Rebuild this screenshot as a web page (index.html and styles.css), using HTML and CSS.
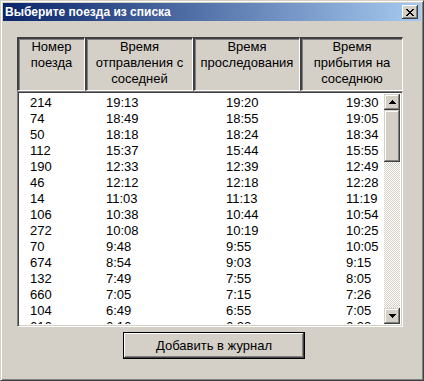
FILE: index.html
```html
<!DOCTYPE html>
<html lang="ru">
<head>
  <meta charset="UTF-8">
  <title>Выберите поезда из списка</title>
  <link rel="stylesheet" href="styles.css">
</head>
<body>
  <div class="window">
    <div class="titlebar">
      <span class="title">Выберите поезда из списка</span>
      <div class="close">
        <svg width="8" height="7" viewBox="0 0 8 7"><path d="M0 0h2v1H0zM6 0h2v1H6zM1 1h2v1H1zM5 1h2v1H5zM2 2h4v1H2zM3 3h2v1H3zM2 4h4v1H2zM1 5h2v1H1zM5 5h2v1H5zM0 6h2v1H0zM6 6h2v1H6z" fill="#000"/></svg>
      </div>
    </div>

    <div class="content">
      <div class="header">
        <div class="hcell c1">Номер<br>поезда</div>
        <div class="hcell c2">Время<br>отправления с<br>соседней</div>
        <div class="hcell c3">Время<br>проследования</div>
        <div class="hcell c4">Время<br>прибытия на<br>соседнюю</div>
      </div>

      <div class="list">
        <div class="rows">
          <div class="row"><span>214</span><span>19:13</span><span>19:20</span><span>19:30</span></div>
          <div class="row"><span>74</span><span>18:49</span><span>18:55</span><span>19:05</span></div>
          <div class="row"><span>50</span><span>18:18</span><span>18:24</span><span>18:34</span></div>
          <div class="row"><span>112</span><span>15:37</span><span>15:44</span><span>15:55</span></div>
          <div class="row"><span>190</span><span>12:33</span><span>12:39</span><span>12:49</span></div>
          <div class="row"><span>46</span><span>12:12</span><span>12:18</span><span>12:28</span></div>
          <div class="row"><span>14</span><span>11:03</span><span>11:13</span><span>11:19</span></div>
          <div class="row"><span>106</span><span>10:38</span><span>10:44</span><span>10:54</span></div>
          <div class="row"><span>272</span><span>10:08</span><span>10:19</span><span>10:25</span></div>
          <div class="row"><span>70</span><span>9:48</span><span>9:55</span><span>10:05</span></div>
          <div class="row"><span>674</span><span>8:54</span><span>9:03</span><span>9:15</span></div>
          <div class="row"><span>132</span><span>7:49</span><span>7:55</span><span>8:05</span></div>
          <div class="row"><span>660</span><span>7:05</span><span>7:15</span><span>7:26</span></div>
          <div class="row"><span>104</span><span>6:49</span><span>6:55</span><span>7:05</span></div>
          <div class="row"><span>616</span><span>6:16</span><span>6:22</span><span>6:32</span></div>
        </div>
        <div class="scrollbar">
          <div class="sbtn">
            <svg width="7" height="4" viewBox="0 0 7 4"><path d="M3 0h1v1h1v1h1v1h1v1H0V3h1V2h1V1h1z" fill="#000"/></svg>
          </div>
          <div class="thumb"></div>
          <div class="track"></div>
          <div class="sbtn">
            <svg width="7" height="4" viewBox="0 0 7 4"><path d="M0 0h7v1H6v1H5v1H4v1H3V3H2V2H1V1H0z" fill="#000"/></svg>
          </div>
        </div>
      </div>

      <div class="footer">
        <button class="btn">Добавить в журнал</button>
      </div>
    </div>
  </div>
</body>
</html>
```

FILE: styles.css
```css
body { margin: 0; font-family: "Liberation Sans", Arial, sans-serif; }
.window { width: 424px; height: 381px; box-sizing: border-box; background: #d4d0c8; border: 1px solid; border-color: #d4d0c8 #404040 #404040 #d4d0c8; box-shadow: inset 1px 1px #fff, inset -1px -1px #808080; padding: 2px; }

.titlebar { height: 18px; display: flex; align-items: center; justify-content: space-between; padding: 0 3px 0 2px; background: linear-gradient(to right, #0a246a, #a6caf0); }
.title { color: #fff; font-weight: bold; font-size: 12px; }
.close { width: 16px; height: 14px; box-sizing: border-box; display: flex; align-items: center; justify-content: center; background: #d4d0c8; box-shadow: inset -1px -1px #404040, inset 1px 1px #fff, inset -2px -2px #808080; }

.content { padding: 16px 0 0 14px; font-size: 13px; color: #000; }

.header { display: flex; width: 386px; height: 54px; }
.hcell { box-sizing: border-box; height: 54px; text-align: center; line-height: 16px; border-top: 2px solid #404040; border-left: 2px solid #404040; border-right: 1px solid #fff; border-bottom: 1px solid #fff; box-shadow: inset 1px 1px #808080; }
.c1 { width: 68px; }
.c2 { width: 108px; }
.c3 { width: 107px; }
.c4 { width: 103px; }

.list { width: 386px; height: 236px; box-sizing: border-box; display: flex; background: #fff; border: 1px solid; border-color: #808080 #fff #fff #808080; box-shadow: inset 1px 1px #404040, inset -1px -1px #d4d0c8; padding: 2px; }
.rows { flex: 1; overflow: hidden; padding-top: 1px; }
.row { display: grid; grid-template-columns: 76px 120px 120px auto; padding-left: 10px; line-height: 16px; height: 16px; white-space: nowrap; }

.scrollbar { width: 16px; display: flex; flex-direction: column; }
.sbtn, .thumb { width: 16px; height: 16px; box-sizing: border-box; display: flex; align-items: center; justify-content: center; background: #d4d0c8; box-shadow: inset -1px -1px #404040, inset 1px 1px #d4d0c8, inset -2px -2px #808080, inset 2px 2px #fff; }
.thumb { height: 52px; }
.track { flex: 1; background: repeating-conic-gradient(#fff 0 25%, #d4d0c8 0 50%) 0 0 / 2px 2px; }

.footer { padding: 5px 0 0 106px; }
.btn { width: 182px; height: 27px; font: 13px "Liberation Sans", Arial, sans-serif; color: #000; background: #d4d0c8; border: 1px solid #000; box-shadow: inset -1px -1px #404040, inset 1px 1px #fff, inset -2px -2px #808080; padding: 0; }
```
